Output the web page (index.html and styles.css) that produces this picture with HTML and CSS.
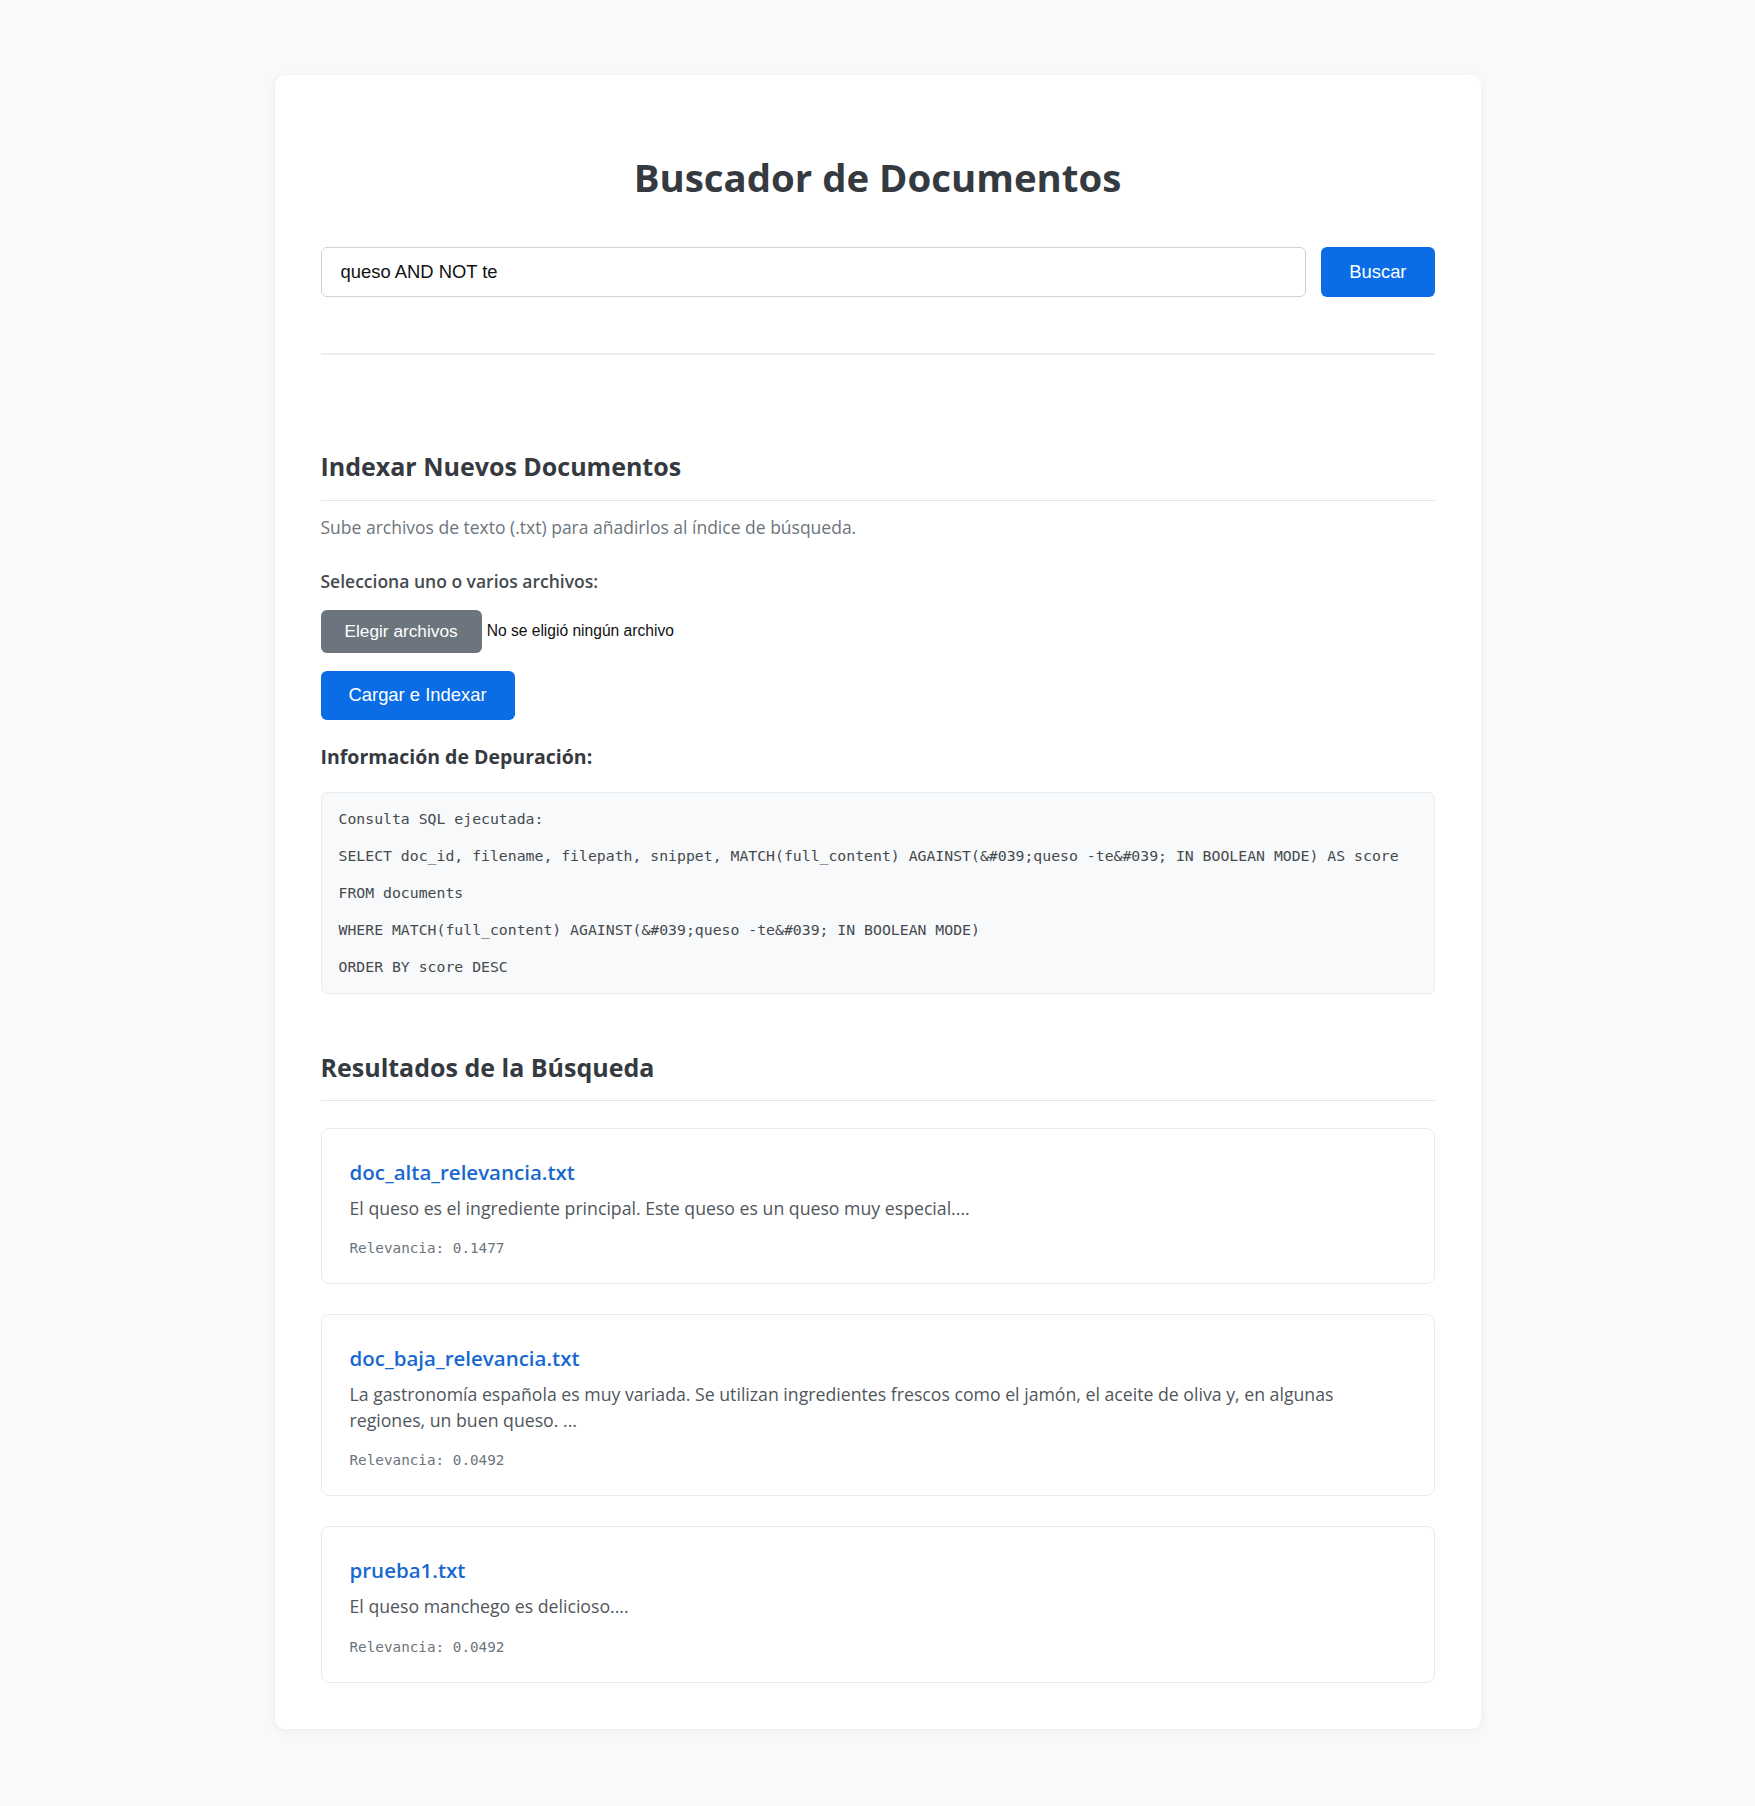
FILE: index.html
```html
<!DOCTYPE html>
<html lang="es">
<head>
<meta charset="utf-8">
<title>Buscador de Documentos</title>
<link rel="stylesheet" href="styles.css">
</head>
<body>
<main class="container">
  <h1 class="title">Buscador de Documentos</h1>
  <form class="search-form">
    <input class="search-input" type="text" value="queso AND NOT te">
    <button class="btn btn-primary btn-search" type="button">Buscar</button>
  </form>
  <hr class="divider">

  <section class="upload">
    <h2 class="section-title">Indexar Nuevos Documentos</h2>
    <p class="muted">Sube archivos de texto (.txt) para añadirlos al índice de búsqueda.</p>
    <label class="field-label">Selecciona uno o varios archivos:</label>
    <div class="file-row">
      <span class="file-btn">Elegir archivos</span>
      <span class="file-name">No se eligió ningún archivo</span>
    </div>
    <button class="btn btn-primary btn-upload" type="button">Cargar e Indexar</button>
  </section>

  <h3 class="debug-title">Información de Depuración:</h3>
  <pre class="debug">Consulta SQL ejecutada:

SELECT doc_id, filename, filepath, snippet, MATCH(full_content) AGAINST(&amp;#039;queso -te&amp;#039; IN BOOLEAN MODE) AS score

FROM documents

WHERE MATCH(full_content) AGAINST(&amp;#039;queso -te&amp;#039; IN BOOLEAN MODE)

ORDER BY score DESC</pre>

  <section class="results">
    <h2 class="section-title">Resultados de la Búsqueda</h2>
    <div class="result-list">
      <article class="result">
        <a class="result-title" href="#">doc_alta_relevancia.txt</a>
        <p class="result-snippet">El queso es el ingrediente principal. Este queso es un queso muy especial....</p>
        <p class="result-score">Relevancia: 0.1477</p>
      </article>
      <article class="result">
        <a class="result-title" href="#">doc_baja_relevancia.txt</a>
        <p class="result-snippet">La gastronomía española es muy variada. Se utilizan ingredientes frescos como el jamón, el aceite de oliva y, en algunas regiones, un buen queso. ...</p>
        <p class="result-score">Relevancia: 0.0492</p>
      </article>
      <article class="result">
        <a class="result-title" href="#">prueba1.txt</a>
        <p class="result-snippet">El queso manchego es delicioso....</p>
        <p class="result-score">Relevancia: 0.0492</p>
      </article>
    </div>
  </section>
</main>
</body>
</html>
```

FILE: styles.css
```css
* {
  box-sizing: border-box;
}

body {
  margin: 0;
  padding: 75px 0 76px;
  background: #f8f9fa;
  font-family: "Open Sans", "Noto Sans", sans-serif;
  font-size: 17.5px;
  color: #343a40;
}

.container {
  width: 1206px;
  margin: 0 auto;
  padding: 46px;
  background: #ffffff;
  border-radius: 10px;
  box-shadow: 0 2px 10px rgba(0, 0, 0, 0.06);
}

.title {
  margin: 29px 0 42px;
  font-size: 38.4px;
  line-height: 55px;
  font-weight: 700;
  text-align: center;
  color: #343a40;
}

.search-form {
  display: flex;
  gap: 15px;
  margin: 0;
}

.search-input {
  flex: 1;
  height: 50px;
  padding: 0 19px;
  border: 1px solid #ced4da;
  border-radius: 6px;
  font-family: "Liberation Sans", Arial, sans-serif;
  font-size: 18.4px;
  color: #111;
  background: #fff;
}

.btn {
  border: none;
  border-radius: 6px;
  font-family: "Liberation Sans", Arial, sans-serif;
  font-size: 18.4px;
  color: #ffffff;
  cursor: pointer;
}

.btn-primary {
  background: #0a6de6;
}

.btn-search {
  height: 50px;
  padding: 0 28px;
}

.divider {
  margin: 56px 0 0;
  border: none;
  border-top: 2px solid #eceef0;
}

.upload {
  margin-top: 95px;
}

.section-title {
  margin: 0;
  padding-bottom: 16.5px;
  border-bottom: 1px solid #e3e6e9;
  font-size: 25px;
  line-height: 33px;
  font-weight: 700;
  color: #343a40;
}

.muted {
  margin: 13px 0 0;
  line-height: 26px;
  color: #6c757d;
}

.field-label {
  display: block;
  margin-top: 28px;
  line-height: 26px;
  font-weight: 600;
  color: #454a4f;
}

.file-row {
  display: flex;
  align-items: center;
  gap: 5px;
  margin-top: 16px;
}

.file-btn {
  display: inline-flex;
  align-items: center;
  height: 43px;
  padding: 0 24px;
  border-radius: 6px;
  background: #6c757d;
  color: #ffffff;
  font-family: "Liberation Sans", Arial, sans-serif;
  font-size: 17.25px;
}

.file-name {
  font-family: "Liberation Sans", Arial, sans-serif;
  font-size: 15.6px;
  color: #111;
}

.btn-upload {
  display: block;
  margin-top: 18px;
  height: 49px;
  padding: 0 28px;
}

.debug-title {
  margin: 24px 0 0;
  font-size: 19.5px;
  line-height: 26px;
  font-weight: 700;
  color: #343a40;
}

.debug {
  margin: 22px 0 0;
  padding: 17px;
  background: #f8f9fa;
  border: 1px solid #e9ecef;
  border-radius: 6px;
  font-family: "DejaVu Sans Mono", "Liberation Mono", monospace;
  font-size: 14.8px;
  line-height: 18.5px;
  color: #454a4f;
  white-space: pre-wrap;
}

.results {
  margin-top: 56.5px;
}

.result-list {
  display: flex;
  flex-direction: column;
  gap: 30px;
  margin-top: 26.5px;
}

.result {
  padding: 28px 28px 26px;
  border: 1px solid #e9ecef;
  border-radius: 8px;
  background: #fff;
}

.result-title {
  display: block;
  font-size: 20.5px;
  line-height: 30px;
  font-weight: 600;
  color: #1769cf;
  text-decoration: none;
}

.result-snippet {
  margin: 9px 0 0;
  font-size: 17.7px;
  line-height: 25.5px;
  color: #50565c;
}

.result-score {
  margin: 18px 0 0;
  font-family: "DejaVu Sans Mono", "Liberation Mono", monospace;
  font-size: 14.3px;
  line-height: 18px;
  color: #6c757d;
}
```
